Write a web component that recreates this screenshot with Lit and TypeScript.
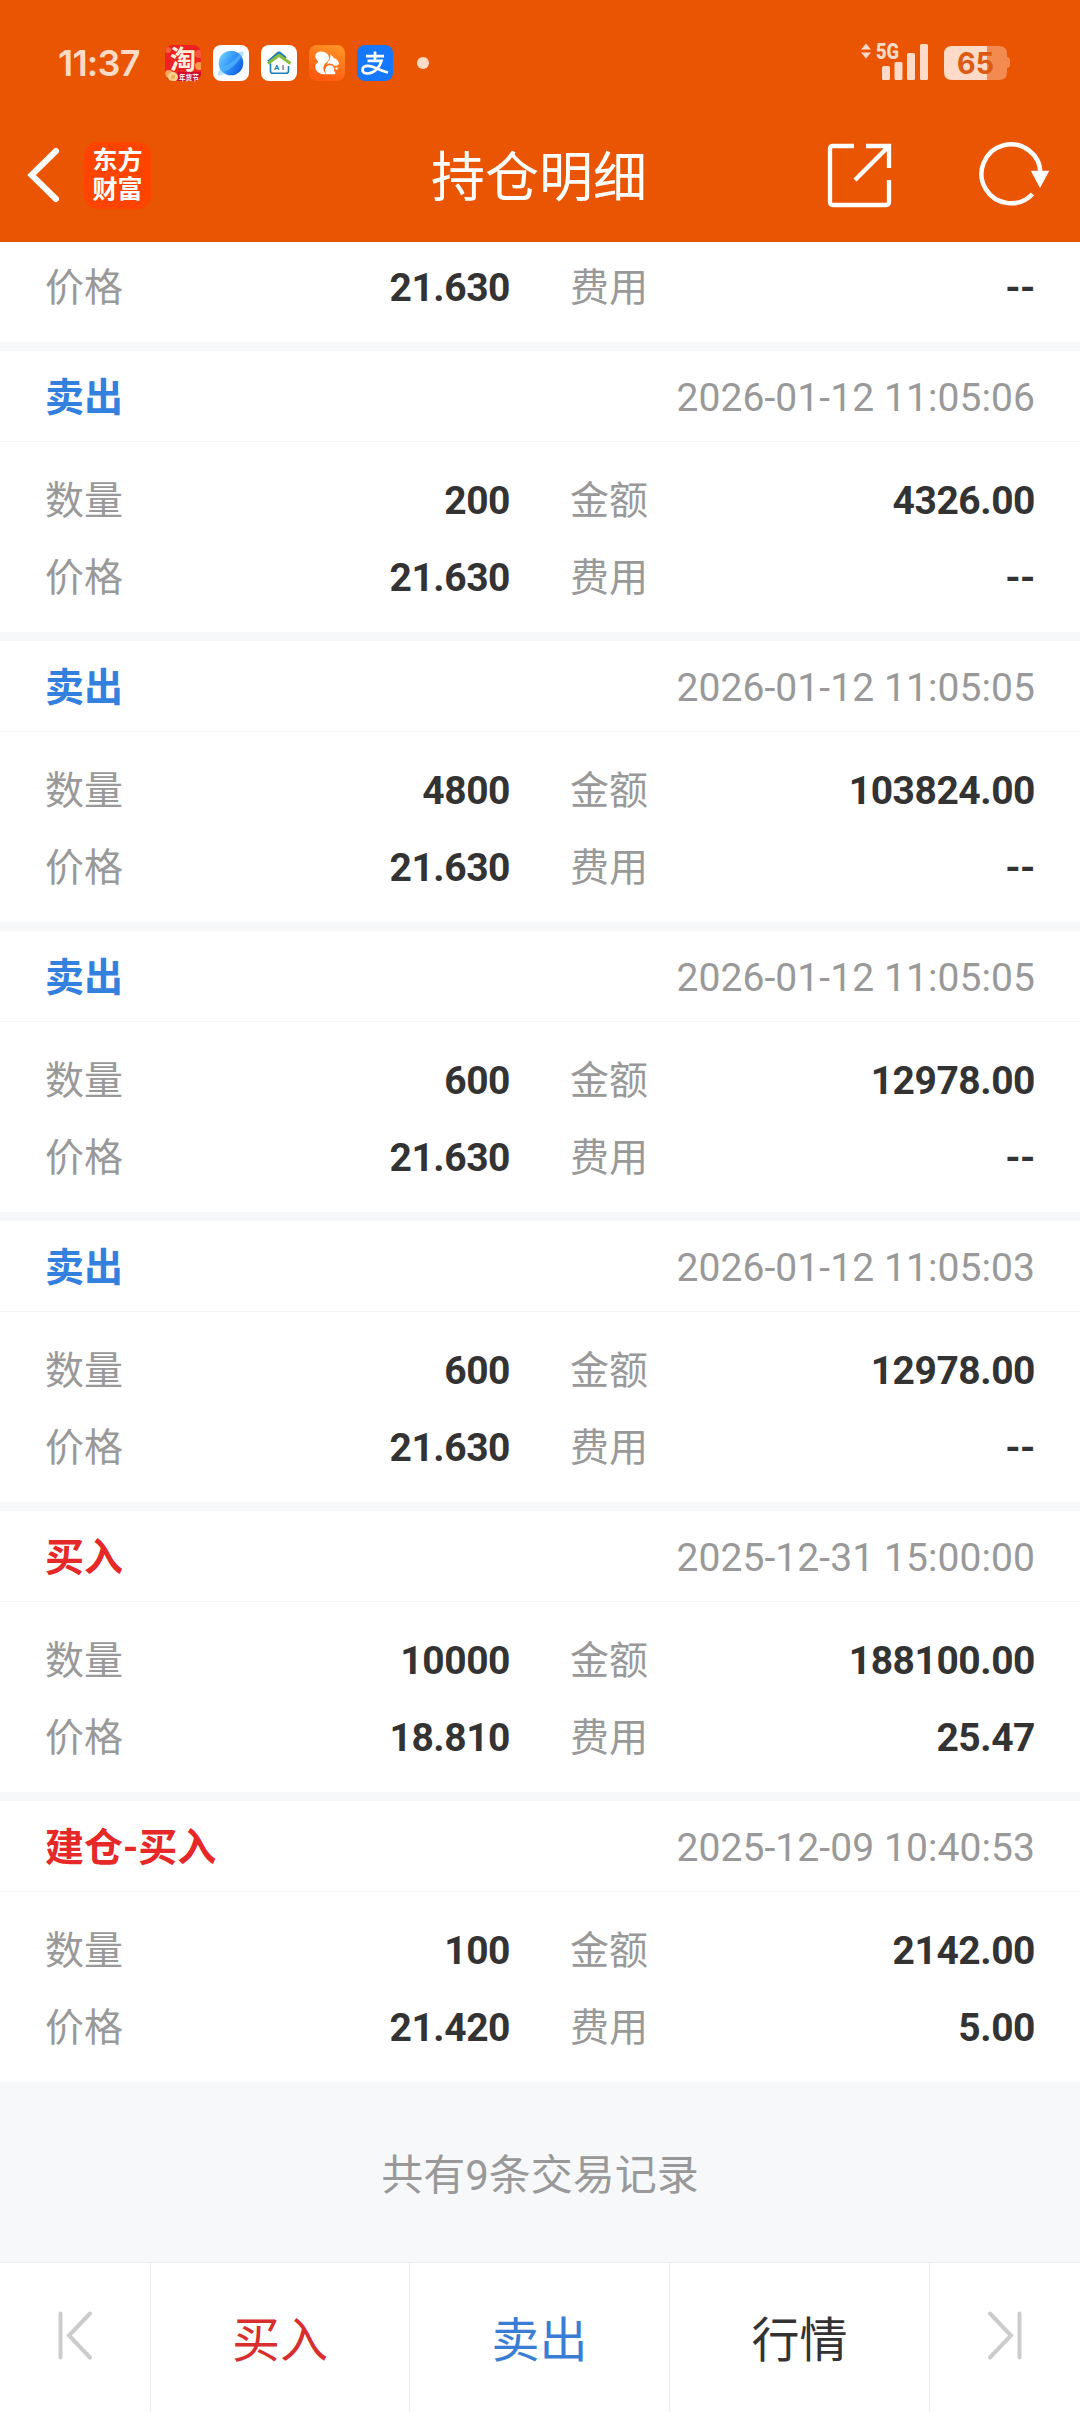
import { LitElement, html, css, svg } from "lit";
import { customElement, property } from "lit/decorators.js";

interface Trade {
  side: "buy" | "sell";
  title: string;
  time: string;
  quantity: string;
  amount: string;
  price: string;
  fee: string;
}

const TRADES: Trade[] = [
  { side: "sell", title: "卖出", time: "2026-01-12 11:05:06", quantity: "200", amount: "4326.00", price: "21.630", fee: "--" },
  { side: "sell", title: "卖出", time: "2026-01-12 11:05:05", quantity: "4800", amount: "103824.00", price: "21.630", fee: "--" },
  { side: "sell", title: "卖出", time: "2026-01-12 11:05:05", quantity: "600", amount: "12978.00", price: "21.630", fee: "--" },
  { side: "sell", title: "卖出", time: "2026-01-12 11:05:03", quantity: "600", amount: "12978.00", price: "21.630", fee: "--" },
  { side: "buy", title: "买入", time: "2025-12-31 15:00:00", quantity: "10000", amount: "188100.00", price: "18.810", fee: "25.47" },
  { side: "buy", title: "建仓-买入", time: "2025-12-09 10:40:53", quantity: "100", amount: "2142.00", price: "21.420", fee: "5.00" },
];

const taobaoIcon = svg`
  <defs>
    <clipPath id="tb-clip"><rect width="36" height="36" rx="8"/></clipPath>
  </defs>
  <g clip-path="url(#tb-clip)">
    <rect width="36" height="36" fill="#ee2222"/>
    <circle cx="3" cy="5" r="3" fill="#f8603c"/>
    <circle cx="34" cy="9" r="4" fill="#f9573c"/>
    <circle cx="34" cy="21" r="4" fill="#fb9a4c"/>
    <path d="M13 27 H36 V36 H10 Z" fill="#cf0f2c"/>
    <circle cx="4" cy="29" r="4" fill="#f9a35c"/>
    <circle cx="8" cy="32" r="5" fill="#fdd28b"/>
    <circle cx="8" cy="32" r="2" fill="#f6a94e"/>
  </g>
  <text class="cjk" x="5" y="23.500" font-size="26" font-weight="700" fill="#fff0d8">淘</text>
  <text class="cjk" x="14" y="34.500" font-size="6.600" font-weight="700" fill="#fff">年货节</text>`;

const planetIcon = svg`
  <defs>
    <linearGradient id="pl" x1="0" y1="0.2" x2="1" y2="0.8">
      <stop offset="0" stop-color="#6fd0ff"/><stop offset="0.5" stop-color="#2f93f8"/><stop offset="1" stop-color="#0a58e0"/>
    </linearGradient>
  </defs>
  <rect width="36" height="36" rx="8" fill="#fafcff"/>
  <path d="M24 8 C29 5.500 31.500 6 30.500 9 C29 13 22 21 15 26 C9 30.500 4.500 31.500 5 28.500 C5.300 27 6 25.500 8 23 Z" fill="#b5e0fd"/>
  <circle cx="18" cy="18" r="12.300" fill="url(#pl)"/>
  <path d="M28.500 11.500 C24 18.500 16 26 9.500 27 C8 25.500 7 24 6.500 22.500 C14 22 22 15.500 26 9 Z" fill="#52b4fb" opacity="0.75"/>`;

const homeIcon = svg`
  <rect width="36" height="36" rx="8" fill="#fff"/>
  <path d="M7 16.500 L16.500 8.300 Q18 7 19.500 8.300 L25 13" fill="none" stroke="#1b78b4" stroke-width="2.200"/>
  <path d="M7 18.500 L16.500 11.200 Q18 10 19.500 11.200 L29.500 18.500" fill="none" stroke="#86bd3c" stroke-width="3"/>
  <path d="M9.500 18.500 V26 Q9.500 28.300 12 28.300 H25 Q27.500 28.300 27.500 26 V21" fill="none" stroke="#1b7fb8" stroke-width="1.600"/>
  <text x="13" y="25" font-size="8" font-weight="700" fill="#1b7fb8" class="latin" textLength="10">AI</text>`;

const squirrelIcon = svg`
  <defs>
    <linearGradient id="sq" x1="1" y1="0" x2="0.6" y2="1">
      <stop offset="0" stop-color="#ff9a28"/><stop offset="1" stop-color="#ff5a10"/>
    </linearGradient>
  </defs>
  <rect width="36" height="36" rx="8" fill="url(#sq)"/>
  <path d="M8 15 C4.500 11 7 6.500 12 6.500 C17 6.500 20 9.500 20 13 C20 16 17 17.500 15.500 19.500 C13.500 22 14 25.500 17 29.300 H14.500 C9 28.500 6 25 6.300 21.500 C6.500 19.500 7.500 18 9.300 17.300 Z" fill="#fff"/>
  <path d="M21.500 9.200 L25 13 C28 14 30 16.500 30 19 C29 20.300 27 20.800 25 20.800 C23.500 18.200 19.500 18 17.800 19.800 C18 17 20.500 15.500 21 13.500 Z" fill="#fff"/>
  <path d="M17.200 29.300 C14.800 24.500 17 20.300 20.800 20.300 C24.500 20.300 26.300 23.500 24.600 26.400 H26.200 V29.300 Z" fill="#fff"/>
  <circle cx="27.500" cy="23.500" r="1.300" fill="#fff"/>`;

const alipayIcon = svg`
  <rect width="36" height="36" rx="8" fill="#1677ff"/>
  <path d="M9 11.200 H27 M18 6.500 V15.800 M10.500 15.800 H24.500 C23 21.500 17.500 28.500 10.500 28.500 C7.500 28.500 5.500 27 5.500 24.800 C5.500 22.500 7.700 20.800 10.800 20.800 C17 20.800 22 25.500 31 27.500" fill="none" stroke="#fff" stroke-width="2.700"/>`;

const STATUS_ICONS = [taobaoIcon, planetIcon, homeIcon, squirrelIcon, alipayIcon];

@customElement("status-bar")
class StatusBar extends LitElement {
  static styles = css`
    :host {
      display: flex;
      height: 108px;
      padding: 16px 70px 0 58px;
      box-sizing: border-box;
      align-items: center;
      justify-content: space-between;
      font-family: Roboto, "Noto Sans CJK SC", sans-serif;
    }
    .left { display: flex; align-items: center; height: 92px; padding-top: 1px; box-sizing: border-box; }
    .time {
      width: 107px;
      color: #fddbc8;
      font-family: Inter, Roboto, sans-serif;
      font-size: 36px;
      font-weight: 600;
      line-height: 44px;
      letter-spacing: -0.8px;
      white-space: nowrap;
    }
    .apps { display: flex; gap: 12px; }
    .dot { width: 12px; height: 12px; margin-left: 24px; border-radius: 50%; background: #fddbc8; }
    svg { display: block; overflow: visible; }
    .signal { margin-bottom: 2px; }
    .cjk { font-family: "Noto Sans CJK SC", sans-serif; }
    .latin { font-family: Roboto, sans-serif; }
    .inter { font-family: Inter, Roboto, sans-serif; }
  `;

  render() {
    return html`
      <div class="left">
        <span class="time">11:37</span>
        <div class="apps">
          ${STATUS_ICONS.map((icon) => html`<svg width="36" height="36" viewBox="0 0 36 36">${icon}</svg>`)}
        </div>
        <span class="dot"></span>
      </div>
      <svg class="signal" width="150" height="38" viewBox="0 0 150 38">
        <g fill="#fddbc8">
          <path d="M1 7.500 L6 1.500 L11 7.500 Z M1 10.500 H11 L6 16.500 Z"/>
          <rect x="22" y="24" width="8" height="14" rx="1.500"/>
          <rect x="34.500" y="20" width="8" height="18" rx="1.500"/>
          <rect x="47" y="11" width="8" height="27" rx="1.500"/>
          <rect x="60" y="2" width="8" height="36" rx="1.500"/>
          <text class="latin" x="16" y="17" font-size="22" font-weight="900" textLength="23" lengthAdjust="spacingAndGlyphs">5G</text>
        </g>
        <path d="M92 4 H139 Q147 4 147 12 V15 Q150 15.500 150 18 V23 Q150 25.500 147 26 V30 Q147 38 139 38 H92 Z" fill="#f38a50"/>
        <path d="M127 4 H92 Q84 4 84 12 V30 Q84 38 92 38 H127 Z" fill="#fddbc8"/>
        <text class="inter" x="97" y="32.300" font-size="30" font-weight="700" fill="#dd5a14" textLength="37" lengthAdjust="spacingAndGlyphs">65</text>
      </svg>
    `;
  }
}

@customElement("title-bar")
class TitleBar extends LitElement {
  static styles = css`
    :host {
      display: grid;
      grid-template-columns: 1fr auto 1fr;
      align-items: center;
      height: 134px;
      padding: 0 29px 0 25px;
      box-sizing: border-box;
      font-family: Roboto, "Noto Sans CJK SC", sans-serif;
    }
    .start { display: flex; align-items: center; gap: 24px; }
    .end { display: flex; align-items: center; justify-content: flex-end; gap: 88px; }
    .logo {
      display: flex;
      flex-direction: column;
      align-items: center;
      justify-content: center;
      width: 67px;
      height: 67px;
      border-radius: 14px;
      background: #ff4400;
      color: #fff;
      font-size: 25px;
      font-weight: 700;
      line-height: 29px;
    }
    .title { margin: 0; color: #fff; font-size: 54px; font-weight: 400; line-height: 80px; padding: 8px 0 0 2px; }
    svg { display: block; overflow: visible; }
  `;

  render() {
    return html`
      <div class="start">
        <svg width="35" height="56" viewBox="0 0 35 56" fill="none" stroke="#fff" stroke-width="6">
          <path d="M31 4 L6.500 28 L31 52" stroke-linecap="round" stroke-linejoin="miter"/>
        </svg>
        <div class="logo"><span>东方</span><span>财富</span></div>
      </div>
      <h1 class="title">持仓明细</h1>
      <div class="end">
        <svg width="63" height="63" viewBox="0 0 63 63" fill="none" stroke="#fff" stroke-width="4.300">
          <path d="M26 2 H5 Q2 2 2 5 V58 Q2 61 5 61 H58 Q61 61 61 58 V36"/>
          <path d="M38 2 H61 V24 M61 2 L27 36"/>
        </svg>
        <svg width="72" height="64" viewBox="0 0 72 64">
          <path d="M61.500 31 A29.500 29.500 0 1 0 53.500 51" fill="none" stroke="#fff" stroke-width="4.500"/>
          <path d="M51.700 27.700 H70.300 L61 45 Z" fill="#fff"/>
        </svg>
      </div>
    `;
  }
}

@customElement("trade-field")
class TradeField extends LitElement {
  @property() label = "";
  @property() value = "";

  static styles = css`
    :host { display: flex; flex: 1; justify-content: space-between; align-items: center; }
    .label { color: #999; }
    .value { color: #333; font-weight: 700; letter-spacing: -0.45px; }
  `;

  render() {
    return html`<span class="label">${this.label}</span><span class="value">${this.value}</span>`;
  }
}

@customElement("trade-card")
class TradeCard extends LitElement {
  @property({ attribute: false }) trade!: Trade;

  static styles = css`
    :host { display: block; height: 281px; background: #fff; }
    .head {
      display: flex;
      justify-content: space-between;
      align-items: center;
      height: 91px;
      padding: 4px 45px 0;
      box-sizing: border-box;
      border-bottom: 1px solid #f5f6f8;
    }
    .kind { font-weight: 700; }
    .sell { color: #3480de; }
    .buy { color: #e62828; }
    .time { color: #999; letter-spacing: 0.08px; }
    .body { display: flex; flex-direction: column; padding: 21px 45px 0; }
    .row { display: flex; gap: 60px; height: 77px; }
  `;

  render() {
    const t = this.trade;
    return html`
      <div class="head">
        <span class="kind ${t.side}">${t.title}</span>
        <span class="time">${t.time}</span>
      </div>
      <div class="body">
        <div class="row">
          <trade-field label="数量" .value=${t.quantity}></trade-field>
          <trade-field label="金额" .value=${t.amount}></trade-field>
        </div>
        <div class="row">
          <trade-field label="价格" .value=${t.price}></trade-field>
          <trade-field label="费用" .value=${t.fee}></trade-field>
        </div>
      </div>
    `;
  }
}

@customElement("bottom-nav")
class BottomNav extends LitElement {
  static styles = css`
    :host {
      display: grid;
      grid-template-columns: 151px 259px 260px 260px 150px;
      height: 150px;
      box-sizing: border-box;
      border-top: 1px solid #ebedf0;
      background: #fff;
      font-size: 48px;
    }
    .cell {
      display: flex;
      align-items: center;
      justify-content: center;
      border-right: 1px solid #ececec;
      padding-top: 6px;
    }
    .cell:last-child { border-right: 0; }
    .icon { padding: 0 0 4px; }
    .buy { color: #d82e2e; }
    .sell { color: #3a7dd4; }
    .quote { color: #333; }
    svg { display: block; }
  `;

  render() {
    return html`
      <div class="cell icon">
        <svg width="34" height="49" viewBox="0 0 34 49" fill="none" stroke="#ccc" stroke-width="4" stroke-linecap="round">
          <path d="M2.500 2.500 V46.500 M32 2.500 L11 24.500 L32 46.500"/>
        </svg>
      </div>
      <div class="cell buy">买入</div>
      <div class="cell sell">卖出</div>
      <div class="cell quote">行情</div>
      <div class="cell icon">
        <svg width="34" height="49" viewBox="0 0 34 49" fill="none" stroke="#ccc" stroke-width="4" stroke-linecap="round">
          <path d="M31.500 2.500 V46.500 M2 2.500 L23 24.500 L2 46.500"/>
        </svg>
      </div>
    `;
  }
}

@customElement("app-root")
export class AppRoot extends LitElement {
  static styles = css`
    :host {
      display: flex;
      flex-direction: column;
      width: 1080px;
      height: 2412px;
      overflow: hidden;
      background: #f6f8fa;
      font-family: Roboto, "Noto Sans CJK SC", sans-serif;
      font-size: 39px;
      line-height: 1.2;
    }
    .top { height: 242px; background: #e95503; }
    .list { display: flex; flex-direction: column; gap: 9px; }
    .partial {
      display: flex;
      gap: 60px;
      height: 100px;
      padding: 8px 45px 15px;
      box-sizing: border-box;
      background: #fff;
    }
    .summary {
      display: flex;
      flex: 1;
      align-items: center;
      justify-content: center;
      padding-top: 9px;
      color: #999;
      font-size: 42px;
    }
  `;

  render() {
    return html`
      <header class="top">
        <status-bar></status-bar>
        <title-bar></title-bar>
      </header>
      <main class="list">
        <div class="partial">
          <trade-field label="价格" value="21.630"></trade-field>
          <trade-field label="费用" value="--"></trade-field>
        </div>
        ${TRADES.map((trade) => html`<trade-card .trade=${trade}></trade-card>`)}
      </main>
      <div class="summary">共有9条交易记录</div>
      <bottom-nav></bottom-nav>
    `;
  }
}
